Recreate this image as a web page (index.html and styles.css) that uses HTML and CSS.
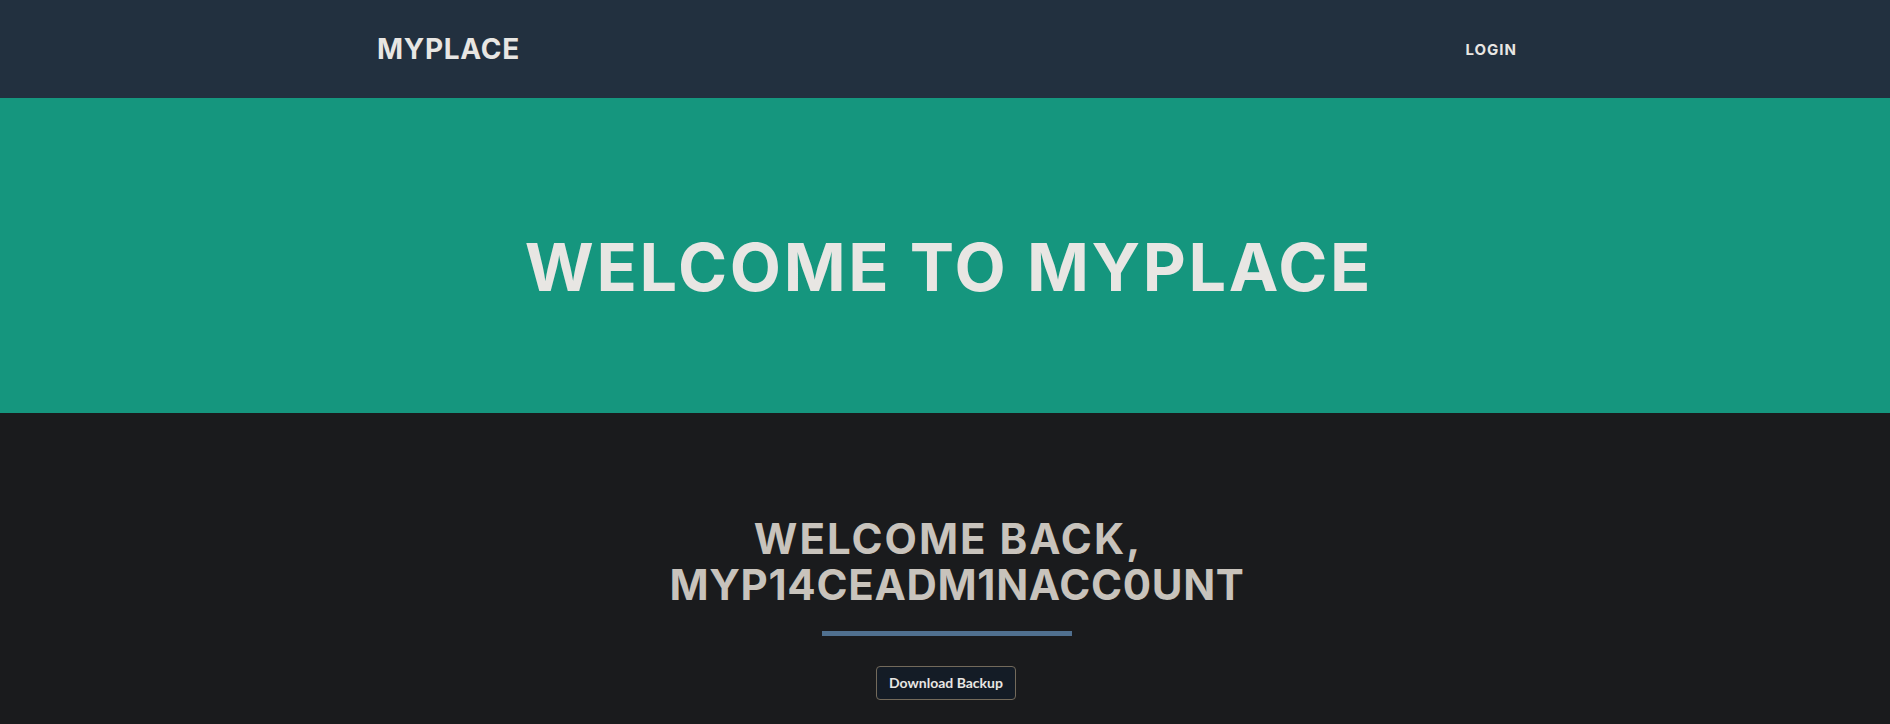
FILE: index.html
```html
<!DOCTYPE html>
<html lang="en">
<head>
<meta charset="utf-8">
<title>MyPlace</title>
<link rel="stylesheet" href="styles.css">
</head>
<body>
<nav class="navbar">
  <div class="container nav-inner">
    <a class="brand" href="#">MyPlace</a>
    <a class="nav-link" href="#">Login</a>
  </div>
</nav>
<header class="hero">
  <div class="container">
    <h1 class="hero-title">Welcome to MyPlace</h1>
  </div>
</header>
<section class="welcome">
  <div class="container">
    <h2 class="welcome-title">Welcome back,<br><span class="user">myp14ceadm1nacc0unt</span></h2>
    <hr class="divider">
    <div class="actions">
      <button class="btn" type="button">Download Backup</button>
    </div>
  </div>
</section>
</body>
</html>
```

FILE: styles.css
```css
html, body {
  margin: 0;
  padding: 0;
}
body {
  background: #1a1b1d;
  color: #e8e6e3;
  font-family: Lato, "Open Sans", sans-serif;
  font-size: 14px;
  overflow: hidden;
}
.container {
  width: 1140px;
  margin: 0 auto;
}
.navbar {
  background: #22303f;
  height: 98px;
  display: flex;
  align-items: center;
}
.nav-inner {
  display: flex;
  justify-content: space-between;
  align-items: center;
}
.brand {
  font-family: Inter, sans-serif;
  font-weight: 700;
  font-size: 28px;
  letter-spacing: 0.7px;
  text-transform: uppercase;
  color: #e8e6e3;
  text-decoration: none;
  line-height: 1;
  margin-left: 2px;
}
.nav-link {
  font-family: Inter, sans-serif;
  font-weight: 700;
  font-size: 15px;
  letter-spacing: 1px;
  text-transform: uppercase;
  color: #e8e6e3;
  text-decoration: none;
  line-height: 1;
  margin-right: -2px;
}
.hero {
  background: #15967e;
  height: 315px;
  box-sizing: border-box;
  padding-top: 133px;
  text-align: center;
}
.hero-title {
  margin: 0;
  padding-left: 8px;
  font-family: Inter, sans-serif;
  font-weight: 700;
  font-size: 66.5px;
  line-height: 1.1;
  letter-spacing: 2.65px;
  text-transform: uppercase;
  color: #e8e6e3;
}
.welcome {
  padding-top: 103px;
  text-align: center;
}
.welcome-title {
  margin: 0;
  padding-left: 6px;
  font-family: Inter, sans-serif;
  font-weight: 700;
  font-size: 42px;
  line-height: 1.1;
  letter-spacing: 2px;
  text-transform: uppercase;
  color: #c8c3bc;
}
.user {
  padding-left: 18px;
  letter-spacing: 0.7px;
}
.divider {
  width: 250px;
  margin: 23px 0 30px calc(50% - 123px);
  border: none;
  border-top: 5px solid #50708f;
  padding: 0;
  height: 0;
}
.actions {
  display: flex;
  justify-content: center;
}
.btn {
  font-family: Lato, sans-serif;
  font-weight: 700;
  font-size: 14px;
  line-height: 20px;
  padding: 6px 12px;
  background: #141c26;
  color: #e8e6e3;
  border: 1px solid #736a5b;
  border-radius: 4px;
  cursor: pointer;
  margin-left: 2px;
}
```
